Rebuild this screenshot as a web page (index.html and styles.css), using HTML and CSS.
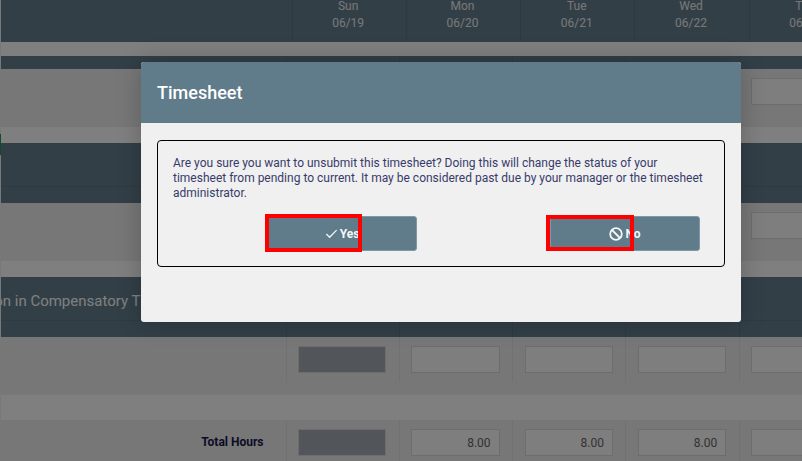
FILE: index.html
```html
<!DOCTYPE html>
<html lang="en">
<head>
<meta charset="utf-8">
<title>Timesheet</title>
<link rel="stylesheet" href="styles.css">
</head>
<body>
<div class="page">
  <div class="head">
    <div class="head-label"></div>
    <div class="head-day">Sun<br>06/19</div>
    <div class="head-day">Mon<br>06/20</div>
    <div class="head-day">Tue<br>06/21</div>
    <div class="head-day">Wed<br>06/22</div>
    <div class="head-day">Thu<br>06/23</div>
  </div>
  <div class="band"></div>
  <div class="grid strip">
    <div class="cell"></div><div class="cell"></div><div class="cell"></div><div class="cell"></div><div class="cell"></div><div class="cell"></div>
  </div>
  <div class="grid row">
    <div class="label"></div>
    <div class="cell"><div class="field"></div></div>
    <div class="cell"><div class="field"></div></div>
    <div class="cell"><div class="field"></div></div>
    <div class="cell"><div class="field"></div></div>
    <div class="cell"><div class="field"></div></div>
  </div>
  <div class="band"></div>
  <div class="section">
    <div class="section-title"></div>
    <div class="grid section-foot">
      <div class="cell"></div><div class="cell"></div><div class="cell"></div><div class="cell"></div><div class="cell"></div><div class="cell"></div>
    </div>
  </div>
  <div class="grid row">
    <div class="label"></div>
    <div class="cell"><div class="field"></div></div>
    <div class="cell"><div class="field"></div></div>
    <div class="cell"><div class="field"></div></div>
    <div class="cell"><div class="field"></div></div>
    <div class="cell"><div class="field"></div></div>
  </div>
  <div class="band"></div>
  <div class="section">
    <div class="section-title"><span class="section-text">Participation in Compensatory Time</span></div>
    <div class="grid section-foot">
      <div class="cell"></div><div class="cell"></div><div class="cell"></div><div class="cell"></div><div class="cell"></div><div class="cell"></div>
    </div>
  </div>
  <div class="grid row">
    <div class="label"></div>
    <div class="cell"><div class="field locked"></div></div>
    <div class="cell"><div class="field"></div></div>
    <div class="cell"><div class="field"></div></div>
    <div class="cell"><div class="field"></div></div>
    <div class="cell"><div class="field"></div></div>
  </div>
  <div class="band band-wide"></div>
  <div class="grid row row-total">
    <div class="label total">Total Hours</div>
    <div class="cell"><div class="field locked"></div></div>
    <div class="cell"><div class="field">8.00</div></div>
    <div class="cell"><div class="field">8.00</div></div>
    <div class="cell"><div class="field">8.00</div></div>
    <div class="cell"><div class="field"></div></div>
  </div>
</div>
<div class="edge-mark"></div>
<div class="overlay"></div>
<div class="modal">
  <div class="modal-head">Timesheet</div>
  <div class="modal-body">
    <div class="panel">
      <p class="message">Are you sure you want to unsubmit this timesheet? Doing this will change the status of your timesheet from pending to current. It may be considered past due by your manager or the timesheet administrator.</p>
      <div class="actions">
        <button class="btn" type="button">
          <svg class="icon" viewBox="0 0 14 14" aria-hidden="true"><path d="M1.5 7.6 5 11 12.5 3.4"/></svg>Yes
        </button>
        <button class="btn" type="button">
          <svg class="icon icon-ban" viewBox="0 0 14 14" aria-hidden="true"><circle cx="7" cy="7" r="5.8"/><path d="M3 3 11 11"/></svg>No
        </button>
      </div>
    </div>
  </div>
  <div class="mark mark-yes"></div>
  <div class="mark mark-no"></div>
</div>
</body>
</html>
```

FILE: styles.css
```css
* { box-sizing: border-box; }
html, body { margin: 0; height: 100%; }
body {
  position: relative;
  width: 802px;
  height: 461px;
  overflow: hidden;
  background: #f0f0f0;
  font-family: Roboto, "Liberation Sans", sans-serif;
  font-size: 12px;
}
.page { margin-left: 1px; width: 901px; }
.head {
  display: grid;
  grid-template-columns: 290.5px repeat(5, 114.3px);
  height: 42px;
  background: #657f8f;
  overflow: hidden;
  color: #fff;
  text-align: center;
  line-height: 17px;
}
.head-day {
  margin-top: -2px;
  padding-right: 2px;
  border-left: 1px solid #5c7583;
  color: #f0f0f0;
}
.band { height: 14px; background: #fff; }
.row + .band { height: 16px; }
.row + .band-wide { height: 26px; margin-top: -1px; border-top: 1px solid #f2f2f2; }
.grid {
  display: grid;
  grid-template-columns: 284.5px repeat(6, 113.3px);
}
.strip {
  height: 13px;
  background: #657f8f;
}
.strip .cell,
.section-foot .cell { border-left: 1px solid #5c7583; padding: 0; height: 16px; }
.strip .cell { height: 13px; }
.strip .cell:first-child,
.section-foot .cell:first-child { grid-column: 2; }
.row {
  height: 58px;
  background: #eee;
  align-items: start;
}
.row-total { height: 41px; }
.label { height: 45px; }
.total {
  padding: 15px 22px 0 0;
  text-align: right;
  font-weight: 700;
  line-height: 14px;
  color: #17184f;
}
.cell {
  height: 45px;
  padding: 9px 12.5px 0 11.5px;
  border-left: 1px solid #e2e2e2;
}
.field {
  height: 27px;
  border: 1px solid #dadada;
  background: #fcfcfc;
  color: #666;
  text-align: right;
  line-height: 26px;
  padding-right: 8px;
}
.field.locked { background: #a5acb5; }
.section { background: #657f8f; overflow: hidden; }
.section-title { height: 43px; }
.section-foot { height: 17px; border-top: 1px solid #5c7583; }
.section-text {
  display: block;
  margin-left: -75px;
  padding-top: 14px;
  font-size: 15px;
  line-height: 20px;
  color: #fff;
  white-space: nowrap;
}
.edge-mark {
  position: absolute;
  left: 0;
  top: 134px;
  width: 1px;
  height: 21px;
  background: #1e9a52;
}
.overlay {
  position: absolute;
  inset: 0;
  background: rgba(0, 0, 0, 0.5);
}
.modal {
  position: absolute;
  left: 141px;
  top: 62px;
  width: 600px;
  height: 260px;
  border-radius: 3px;
  background: #f0f0f0;
  box-shadow: 0 0 24px rgba(0, 0, 0, 0.22);
}
.modal-head {
  height: 61px;
  padding-left: 16px;
  border-radius: 3px 3px 0 0;
  background: #607b89;
  color: #fff;
  font-size: 18px;
  font-weight: 500;
  line-height: 62px;
}
.modal-body { padding: 17px 16px; }
.panel {
  height: 127px;
  padding: 15px;
  border: 1px solid #000;
  border-radius: 4px;
}
.message {
  margin: 0;
  color: #383b6b;
  line-height: 15px;
}
.actions {
  display: flex;
  gap: 133px;
  margin: 15px 0 0 94px;
}
.btn {
  display: flex;
  align-items: center;
  justify-content: center;
  gap: 2px;
  width: 150px;
  height: 35px;
  padding: 0;
  border: 1px solid #7f98a5;
  border-radius: 3px;
  background: #607b89;
  color: #f4f6f7;
  font: 700 12px Roboto, "Liberation Sans", sans-serif;
}
.icon {
  width: 13px;
  height: 13px;
  fill: none;
  stroke: #f4f6f7;
  stroke-width: 1.4;
}
.icon-ban { width: 14px; height: 14px; stroke-width: 1.8; }
.mark {
  position: absolute;
  border: 4px solid #f00;
}
.mark-yes { left: 124px; top: 152px; width: 97px; height: 38px; }
.mark-no { left: 405px; top: 153px; width: 88px; height: 36px; }
```
